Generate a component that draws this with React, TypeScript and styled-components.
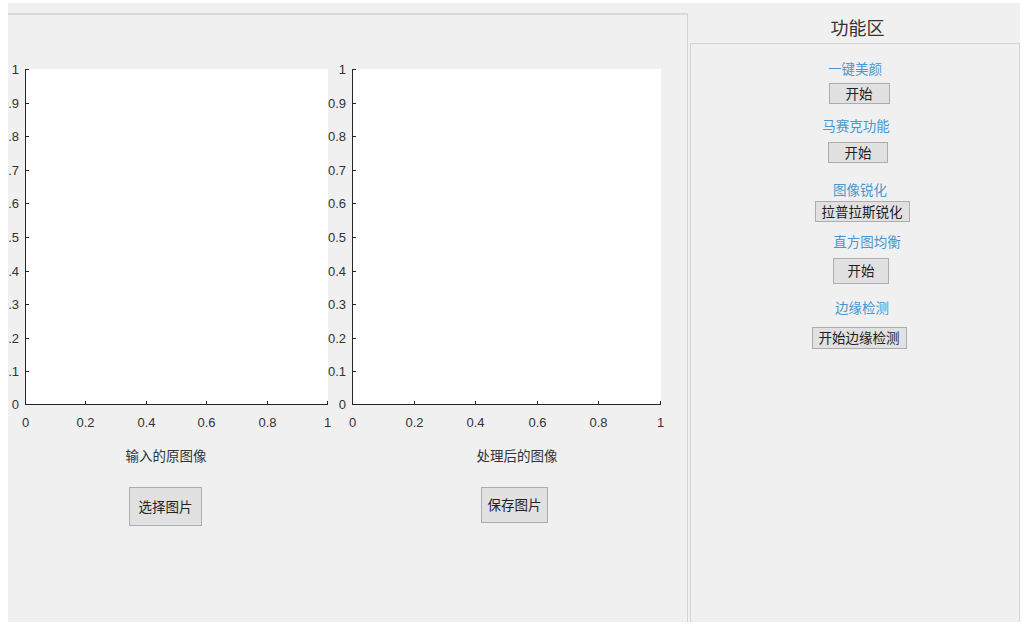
import React from 'react';
import styled, { createGlobalStyle } from 'styled-components';

const GlobalStyle = createGlobalStyle`
  html, body {
    margin: 0;
    padding: 0;
    background: #ffffff;
  }
  body {
    font-family: "Noto Sans CJK SC", "Liberation Sans", sans-serif;
  }
`;

const CJK = `"Noto Sans CJK SC", "Noto Sans", sans-serif`;
const AXIS = '#262626';
const PLOT_H = 336;

type Shifted = { $shift?: number };

// shift the centre of a centred flex item by $shift px
const shiftMargins = (p: Shifted) => {
  const s = (p.$shift ?? 0) * 2;
  return `margin-left: ${Math.max(0, s)}px; margin-right: ${Math.max(0, -s)}px;`;
};

type ChartProps = { width: number };

function Chart(props: ChartProps): JSX.Element {
  const { width } = props;
  const yTicks = Array.from({ length: 11 }, (_, i) => i / 10);
  const xTicks = [0, 0.2, 0.4, 0.6, 0.8, 1];
  const yLabel = (v: number) => (v === 0 || v === 1 ? String(v) : v.toFixed(1));
  return (
    <ChartSvg width={width} height={PLOT_H + 30} viewBox={`0 0 ${width} ${PLOT_H + 30}`}>
      <rect x={0} y={0} width={width} height={PLOT_H} fill="#ffffff" />
      <line x1={0.5} y1={0} x2={0.5} y2={PLOT_H} stroke={AXIS} strokeWidth={1} />
      <line x1={0} y1={PLOT_H - 0.5} x2={width} y2={PLOT_H - 0.5} stroke={AXIS} strokeWidth={1} />
      {yTicks.map((v) => {
        const y = Math.round(PLOT_H - v * PLOT_H) + (v === 1 ? 0.5 : v === 0 ? -0.5 : 0.5);
        return (
          <g key={`y${v}`}>
            <line x1={0} y1={y} x2={4} y2={y} stroke={AXIS} strokeWidth={1} />
            <TickText x={-6} y={y} textAnchor="end" dominantBaseline="central">
              {yLabel(v)}
            </TickText>
          </g>
        );
      })}
      {xTicks.map((v) => {
        const x = Math.round(v * (width - 1)) + 0.5;
        return (
          <g key={`x${v}`}>
            <line x1={x} y1={PLOT_H} x2={x} y2={PLOT_H - 4} stroke={AXIS} strokeWidth={1} />
            <TickText x={x} y={PLOT_H + 17} textAnchor="middle" dominantBaseline="central">
              {String(v)}
            </TickText>
          </g>
        );
      })}
    </ChartSvg>
  );
}

type Feature = { label: string; labelShift: number; button: string; width: number; height: number; buttonShift: number; gaps: [number, number] };

const features: Feature[] = [
  { label: '一键美颜', labelShift: 0, button: '开始', width: 61, height: 21, buttonShift: 4, gaps: [15, 6] },
  { label: '马赛克功能', labelShift: 1, button: '开始', width: 60, height: 21, buttonShift: 3, gaps: [12, 8] },
  { label: '图像锐化', labelShift: 5, button: '拉普拉斯锐化', width: 95, height: 21, buttonShift: 7, gaps: [17, 3] },
  { label: '直方图均衡', labelShift: 12, button: '开始', width: 56, height: 26, buttonShift: 6, gaps: [10, 8] },
  { label: '边缘检测', labelShift: 7, button: '开始边缘检测', width: 95, height: 22, buttonShift: 4, gaps: [14, 11] },
];

export default function App(): JSX.Element {
  return (
    <>
      <GlobalStyle />
      <Frame>
        <ImagePanel>
          <ChartRow>
            <Column $width={303}>
              <Chart width={303} />
              <Caption $shift={-10.5}>输入的原图像</Caption>
              <PushButton $w={73} $h={39} $shift={-11} $top={22}>选择图片</PushButton>
            </Column>
            <Column $width={309}>
              <Chart width={309} />
              <Caption $shift={10.5}>处理后的图像</Caption>
              <PushButton $w={67} $h={36} $shift={8} $top={22}>保存图片</PushButton>
            </Column>
          </ChartRow>
        </ImagePanel>
        <FeaturePanel>
          <PanelTitle>功能区</PanelTitle>
          <PanelBody>
            {features.map((f) => (
              <React.Fragment key={f.label}>
                <FeatureLabel $shift={f.labelShift} $top={f.gaps[0]}>{f.label}</FeatureLabel>
                <PushButton $w={f.width} $h={f.height} $shift={f.buttonShift} $top={f.gaps[1]}>
                  {f.button}
                </PushButton>
              </React.Fragment>
            ))}
          </PanelBody>
        </FeaturePanel>
      </Frame>
    </>
  );
}

const Frame = styled.div`
  margin: 3px 0 0 8px;
  width: 1012px;
  height: 619px;
  background: #f0f0f0;
  display: flex;
  align-items: stretch;
  overflow: hidden;
`;

const ImagePanel = styled.section`
  box-sizing: border-box;
  width: 680px;
  margin-top: 10px;
  border-top: 2px solid #d9d9d9;
  border-right: 1px solid #d4d4d4;
  overflow: hidden;
`;

const ChartRow = styled.div`
  display: flex;
  gap: 24px;
  padding-left: 17px;
  margin-top: 54px;
`;

const Column = styled.div<{ $width: number }>`
  width: ${(p) => p.$width}px;
  display: flex;
  flex-direction: column;
  align-items: center;
`;

const ChartSvg = styled.svg`
  display: block;
  overflow: visible;
  flex-shrink: 0;
`;

const TickText = styled.text`
  font-family: "Liberation Sans", Arial, sans-serif;
  font-size: 13px;
  fill: #333333;
`;

const Caption = styled.div<Shifted>`
  margin-top: 10px;
  font-family: ${CJK};
  font-size: 13.5px;
  line-height: 20px;
  color: #333333;
  white-space: nowrap;
  ${shiftMargins}
`;

const PushButton = styled.button<Shifted & { $w: number; $h: number; $top: number }>`
  box-sizing: border-box;
  width: ${(p) => p.$w}px;
  height: ${(p) => p.$h}px;
  margin-top: ${(p) => p.$top}px;
  ${shiftMargins}
  padding: 0;
  background: #e1e1e1;
  border: 1px solid #adadad;
  border-radius: 0;
  font-family: ${CJK};
  font-size: 13.5px;
  line-height: 1;
  color: #222222;
  white-space: nowrap;
  flex-shrink: 0;
`;

const FeaturePanel = styled.section`
  box-sizing: border-box;
  width: 330px;
  margin-left: 2px;
  display: flex;
  flex-direction: column;
`;

const PanelTitle = styled.h2`
  box-sizing: border-box;
  height: 40px;
  margin: 0;
  padding-top: 13px;
  text-align: center;
  font-family: ${CJK};
  font-weight: normal;
  font-size: 18px;
  line-height: 22px;
  color: #333333;
  padding-left: 5px;
`;

const PanelBody = styled.div`
  flex: 1;
  box-sizing: border-box;
  width: 330px;
  border: 1px solid #d4d4d4;
  border-bottom: none;
  display: flex;
  flex-direction: column;
  align-items: center;
`;

const FeatureLabel = styled.div<Shifted & { $top: number }>`
  margin-top: ${(p) => p.$top}px;
  ${shiftMargins}
  font-family: ${CJK};
  font-size: 13.5px;
  line-height: 18px;
  color: #4896d2;
  white-space: nowrap;
`;
